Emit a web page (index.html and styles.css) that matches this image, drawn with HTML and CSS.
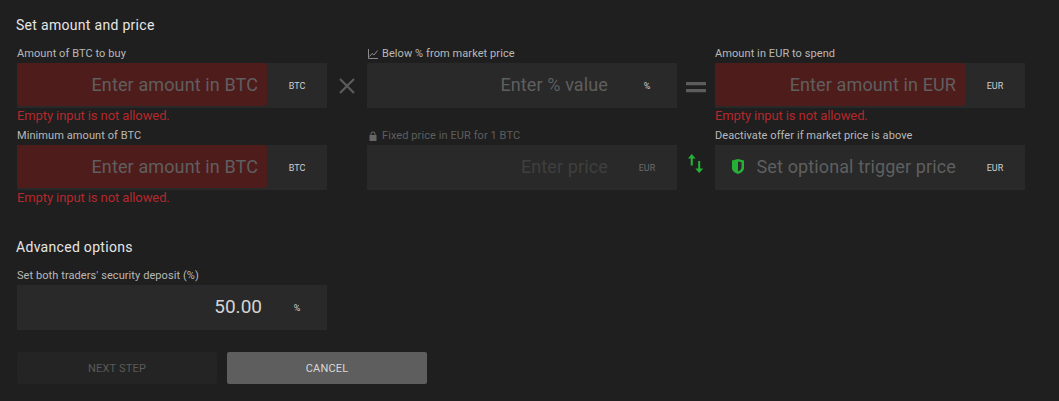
FILE: index.html
```html
<!DOCTYPE html>
<html lang="en">
<head>
<meta charset="utf-8">
<title>Set amount and price</title>
<link rel="stylesheet" href="styles.css">
</head>
<body>
<main class="page">
  <h2 class="heading">Set amount and price</h2>
  <div class="form-grid">
    <div class="field">
      <label class="label">Amount of BTC to buy</label>
      <div class="box">
        <div class="input invalid"><span class="ph">Enter amount in BTC</span></div>
        <span class="unit">BTC</span>
      </div>
      <p class="error">Empty input is not allowed.</p>
    </div>
    <div class="op">
      <svg width="16" height="16" viewBox="0 0 16 16"><path d="M1 1L15 15M15 1L1 15" stroke="#5c5c5c" stroke-width="2.200" fill="none"/></svg>
    </div>
    <div class="field">
      <label class="label"><svg class="lab-icon" width="10" height="10" viewBox="0 0 10 10"><path d="M.5 0V9.500H10M1.500 7.500L4 4.500L6 6L9.500 1.500" stroke="#8a8a8a" stroke-width="1" fill="none"/></svg>Below % from market price</label>
      <div class="box">
        <div class="input"><span class="ph">Enter % value</span></div>
        <span class="unit">%</span>
      </div>
    </div>
    <div class="op">
      <svg class="equals" width="20" height="11" viewBox="0 0 20 11"><path d="M0 0H20V3.300H0ZM0 7H20V10.300H0Z" fill="#5c5c5c"/></svg>
    </div>
    <div class="field">
      <label class="label">Amount in EUR to spend</label>
      <div class="box">
        <div class="input invalid"><span class="ph">Enter amount in EUR</span></div>
        <span class="unit">EUR</span>
      </div>
      <p class="error">Empty input is not allowed.</p>
    </div>

    <div class="field">
      <label class="label">Minimum amount of BTC</label>
      <div class="box">
        <div class="input invalid"><span class="ph">Enter amount in BTC</span></div>
        <span class="unit">BTC</span>
      </div>
      <p class="error">Empty input is not allowed.</p>
    </div>
    <div class="op"></div>
    <div class="field">
      <label class="label muted"><svg class="lab-icon" width="10" height="10" viewBox="0 0 10 10"><path d="M1.500 4H2.500V3A2.500 2.500 0 0 1 7.500 3V4H8.500V10H1.500ZM3.500 4H6.500V3A1.500 1.500 0 0 0 3.500 3Z" fill="#666" fill-rule="evenodd"/></svg>Fixed price in EUR for 1 BTC</label>
      <div class="box">
        <div class="input"><span class="ph dim">Enter price</span></div>
        <span class="unit dim-unit">EUR</span>
      </div>
    </div>
    <div class="op">
      <svg width="16" height="27" viewBox="0 0 16 27"><path d="M3.700 0L7.700 4.500H4.800V11.500H2.700V4.500H0Z" fill="#25b135"/><path d="M10.200 7H12.200V14.500H15.300L11.200 19L7.300 14.500H10.200Z" fill="#25b135"/></svg>
    </div>
    <div class="field">
      <label class="label">Deactivate offer if market price is above</label>
      <div class="box">
        <div class="input trigger">
          <svg width="12" height="15" viewBox="0 0 12 15"><path d="M0 1.500L6 0L12 1.500V9C12 12 9 14 6 15C3 14 0 12 0 9Z" fill="#25b135"/><path d="M6 2.500L9.500 3.300V8.500C9.500 10 8 11.500 6 12.500Z" fill="#292929"/></svg>
          <span class="ph">Set optional trigger price</span>
        </div>
        <span class="unit">EUR</span>
      </div>
    </div>
  </div>

  <h2 class="heading advanced">Advanced options</h2>
  <div class="field single">
    <label class="label">Set both traders' security deposit (%)</label>
    <div class="box">
      <div class="input numeric"><span class="value">50.00</span></div>
      <span class="unit">%</span>
    </div>
  </div>

  <div class="actions">
    <button class="btn disabled" type="button">NEXT STEP</button>
    <button class="btn cancel" type="button">CANCEL</button>
  </div>
</main>
</body>
</html>
```
FILE: styles.css
```css
html, body {
  margin: 0;
  padding: 0;
  height: 100%;
  background: #1f1f1f;
  overflow: hidden;
}
body {
  font-family: Roboto, "Liberation Sans", sans-serif;
  color: #d8d8d8;
}
.page {
  padding: 16px 0 0 17px;
}
.heading {
  margin: 0 0 0 -1px;
  font-size: 14px;
  line-height: 18px;
  font-weight: 400;
  letter-spacing: 0.3px;
  color: #e6e6e6;
}
.form-grid {
  display: grid;
  grid-template-columns: 310px 40px 310px 38px 310px;
  grid-template-rows: 82px 82px;
  margin-top: 10px;
}
.field {
  display: flex;
  flex-direction: column;
  width: 310px;
}
.label {
  display: flex;
  align-items: center;
  height: 19px;
  font-size: 11px;
  line-height: 19px;
  letter-spacing: 0.08px;
  color: #b9b9b9;
}
.label.muted {
  color: #5e5e5e;
}
.lab-icon {
  margin: 0 4px 0 1px;
}
.box {
  display: flex;
  height: 45px;
  background: #292929;
  flex: none;
}
.input {
  width: 250px;
  height: 43px;
  flex: none;
  display: flex;
  align-items: center;
  justify-content: flex-end;
  padding-right: 9px;
  box-sizing: border-box;
  border-radius: 3px;
}
.input.invalid {
  background: #4f1c1c;
}
.input.trigger {
  gap: 13px;
}
.input.numeric {
  padding-right: 5px;
}
.ph {
  font-size: 18px;
  letter-spacing: 0.12px;
  color: #5f5f5f;
  white-space: nowrap;
}
.ph.dim {
  color: #3f3f3f;
}
.value {
  font-size: 19px;
  color: #d4d4d4;
}
.unit {
  flex: 1;
  text-align: center;
  font-size: 9px;
  line-height: 47px;
  color: #cfcfcf;
}
.dim-unit {
  color: #6a6a6a;
}
.error {
  margin: 0;
  padding-top: 1px;
  font-size: 13px;
  line-height: 14px;
  letter-spacing: -0.1px;
  color: #b5282c;
}
.op {
  display: flex;
  align-items: center;
  justify-content: center;
  height: 45px;
  margin-top: 19px;
}
.equals {
  margin-top: 3px;
}
.advanced {
  margin-top: 30px;
}
.single {
  margin-top: 10px;
}
.actions {
  display: flex;
  gap: 10px;
  margin-top: 22px;
}
.btn {
  width: 200px;
  height: 32px;
  border: 0;
  border-radius: 2px;
  font-family: inherit;
  font-size: 11px;
  letter-spacing: 0.2px;
  padding: 0;
}
.btn.disabled {
  background: #242424;
  color: #5a5a5a;
}
.btn.cancel {
  background: #5e5e5e;
  color: #d8d8d8;
}
```
